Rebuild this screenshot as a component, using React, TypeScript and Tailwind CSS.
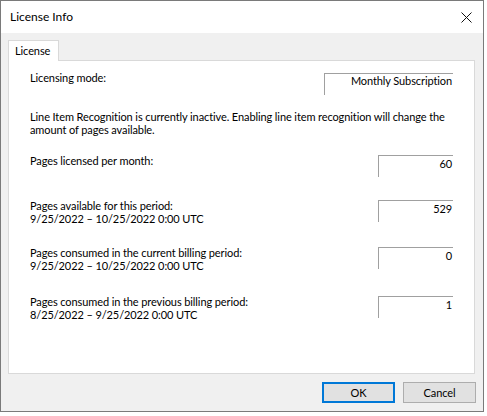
import React from "react";

const font = { fontFamily: 'Lato, "Noto Sans", "Liberation Sans", sans-serif' };

function ValueBox({ value, wide }: { value: string; wide?: boolean }) {
  return (
    <div
      className={`h-[22px] border-t border-l border-[#a0a0a0] text-right pr-[1px] whitespace-nowrap ${
        wide ? "w-[129px] pt-0" : "w-[75px] pt-[1px]"
      }`}
    >
      {value}
    </div>
  );
}

function Row({ label, sub, value, mt }: { label: string; sub?: string; value: string; mt: string }) {
  return (
    <div className={`flex items-start justify-between ${mt}`}>
      <div className="whitespace-nowrap">
        <div>{label}</div>
        {sub && <div>{sub}</div>}
      </div>
      <div className="mt-[1px]">
        <ValueBox value={value} />
      </div>
    </div>
  );
}

export default function App() {
  return (
    <div className="w-[487px] h-[416px] bg-white text-black" style={font}>
      <div className="w-[484px] h-[412px] border border-[#7a7a7a] flex flex-col">
        {/* Title bar */}
        <div className="h-[32px] bg-white flex items-center justify-between pl-[9px] pr-[11px]">
          <span className="text-[12px] leading-[16px]">License Info</span>
          <svg width="11" height="11" viewBox="0 0 11 11" className="mt-[1px]">
            <path d="M0.5 0.5 L10.5 10.5 M10.5 0.5 L0.5 10.5" stroke="#111" strokeWidth="1" />
          </svg>
        </div>

        {/* Body */}
        <div className="flex-1 bg-[#f0f0f0] pt-[7px] pl-[7px] pr-[8px] flex flex-col text-[11px] leading-[13px] tracking-[-0.1px]">
          <div className="flex">
            <div className="relative z-10 h-[21px] -mb-px w-[51px] bg-white border-t border-l border-r border-[#d9d9d9] pl-[6px] pt-[3px]">
              License
            </div>
          </div>
          <div className="h-[314px] bg-white border border-[#d9d9d9] pt-[10px] pl-[21px] pr-[21px]">
            <div className="flex items-start justify-between">
              <div className="whitespace-nowrap">Licensing mode:</div>
              <div className="mt-[2px]">
                <ValueBox value="Monthly Subscription" wide />
              </div>
            </div>
            <div className="mt-[15px] whitespace-nowrap">
              Line Item Recognition is currently inactive. Enabling line item recognition will change the
              <br />
              amount of pages available.
            </div>
            <Row label="Pages licensed per month:" value="60" mt="mt-[18px]" />
            <Row
              label="Pages available for this period:"
              sub="9/25/2022 – 10/25/2022 0:00 UTC"
              value="529"
              mt="mt-[22px]"
            />
            <Row
              label="Pages consumed in the current billing period:"
              sub="9/25/2022 – 10/25/2022 0:00 UTC"
              value="0"
              mt="mt-[21px]"
            />
            <Row
              label="Pages consumed in the previous billing period:"
              sub="8/25/2022 – 9/25/2022 0:00 UTC"
              value="1"
              mt="mt-[23px]"
            />
          </div>

          <div className="flex justify-end gap-[8px] mt-[8px] -mr-px">
            <button className="w-[73px] h-[21px] bg-[#e1e1e1] border-2 border-[#0078d7] leading-[17px]">
              OK
            </button>
            <button className="w-[73px] h-[21px] bg-[#e1e1e1] border border-[#adadad] leading-[19px]">
              Cancel
            </button>
          </div>
        </div>
      </div>
    </div>
  );
}
